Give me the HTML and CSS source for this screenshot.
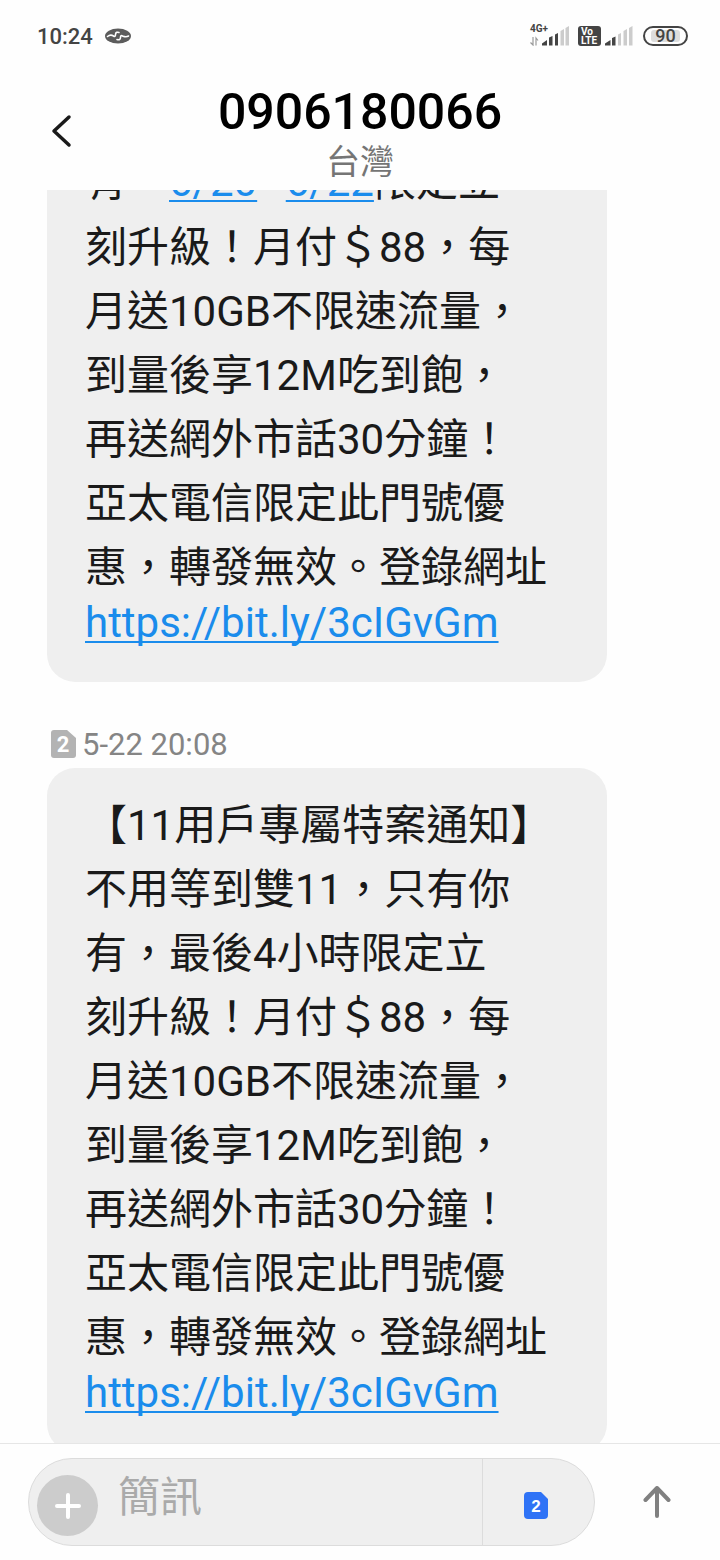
FILE: index.html
```html
<!DOCTYPE html>
<html lang="zh-Hant">

<head>
    <meta charset="utf-8">
    <meta name="viewport" content="width=device-width, initial-scale=1">
    <title>0906180066</title>
    <link rel="stylesheet" href="styles.css">
</head>

<body>
    <div class="status-bar">
        <span class="clock">10:24</span>
        <svg class="status-app" width="26" height="16" viewBox="0 0 26 16">
            <ellipse cx="13" cy="8" rx="13" ry="7.5" fill="#5c5c5c" />
            <path d="M2.500 8.500C5 6.500 7 7 8.500 8C10 9 10.500 8 10.500 6.500C10.500 4 12.500 4 14 4.500M23.500 8C21 9.500 19 8.500 17.500 8C16 7 15.500 8 15.500 9.500C15.500 12 13.500 12 12 11.500"
                fill="none" stroke="#fff" stroke-width="1.6" stroke-linecap="round" />
        </svg>
        <div class="status-icons">
            <div class="network">
                <span class="network-type">4G+</span>
                <svg width="39" height="20" viewBox="0 0 39 20">
                    <path d="M3 11V19L0.500 16.500M6 19.500V12L8 14.500" fill="none" stroke="#999" stroke-width="1.200" />
                    <path d="M12 19.500V17.500L17 14V19.500ZM19 19.500V11.500L22.500 10V19.500ZM25 19.500V8.500L28 7V19.500Z" fill="#444" />
                    <path d="M30.500 19.500V5L34 3V19.500ZM35.500 19.500V2L39 0V19.500Z" fill="#ccc" />
                </svg>
            </div>
            <div class="volte"><span>Vo</span><span>LTE</span></div>
            <svg class="signal" width="28" height="20" viewBox="0 0 28 20">
                <path d="M0 19.500V17.500L5.500 14V19.500ZM7 19.500V12L10.500 10.500V19.500Z" fill="#444" />
                <path d="M13 19.500V8.500L16 7V19.500ZM18.500 19.500V5L22 3V19.500ZM24 19.500V2L27.500 0V19.500Z" fill="#ccc" />
            </svg>
            <span class="battery"><span class="battery-level">90</span></span>
        </div>
    </div>

    <header class="header">
        <button class="back" type="button" aria-label="返回">
            <svg width="22" height="36" viewBox="0 0 22 36">
                <path d="M18 4L3 18L18 32" fill="none" stroke="#1a1a1a" stroke-width="3.500" stroke-linecap="round"
                    stroke-linejoin="round" />
            </svg>
        </button>
        <div class="contact">
            <h1>0906180066</h1>
            <p>台灣</p>
        </div>
    </header>

    <main class="thread">
        <div class="messages">
            <div class="bubble">
                <span class="dates">有，<a href="#">6/20</a>~<a href="#">6/22</a>限定立</span>
                刻升級！月付＄88，每<br>
                月送10GB不限速流量，<br>
                到量後享12M吃到飽，<br>
                再送網外市話30分鐘！<br>
                亞太電信限定此門號優<br>
                惠，轉發無效。登錄網址
                <a class="url" href="https://bit.ly/3cIGvGm">https://bit.ly/3cIGvGm</a>
            </div>

            <div class="stamp">
                <svg width="25" height="28" viewBox="0 0 25 28">
                    <path d="M3 0H16L25 8V25Q25 28 22 28H3Q0 28 0 25V3Q0 0 3 0Z" fill="#b3b3b3" />
                    <text class="sim-number" x="12" y="22" font-size="22">2</text>
                </svg>
                <time>5-22 20:08</time>
            </div>

            <div class="bubble">
                【11用戶專屬特案通知】<br>
                不用等到雙11，只有你<br>
                有，最後4小時限定立<br>
                刻升級！月付＄88，每<br>
                月送10GB不限速流量，<br>
                到量後享12M吃到飽，<br>
                再送網外市話30分鐘！<br>
                亞太電信限定此門號優<br>
                惠，轉發無效。登錄網址
                <a class="url" href="https://bit.ly/3cIGvGm">https://bit.ly/3cIGvGm</a>
            </div>
        </div>
    </main>

    <form class="composer">
        <div class="field">
            <button class="add" type="button" aria-label="附件">
                <svg width="26" height="26" viewBox="0 0 26 26">
                    <path d="M13 2V24M2 13H24" stroke="#fff" stroke-width="4" stroke-linecap="round" />
                </svg>
            </button>
            <input class="text" type="text" placeholder="簡訊" aria-label="簡訊">
            <button class="sim" type="button" aria-label="SIM 2">
                <svg width="24" height="27" viewBox="0 0 24 27">
                    <path d="M4 0H17L24 7V23Q24 27 20 27H4Q0 27 0 23V4Q0 0 4 0Z" fill="#2f73f6" />
                    <text class="sim-number" x="12" y="20" font-size="17">2</text>
                </svg>
            </button>
        </div>
        <button class="send" type="button" aria-label="傳送">
            <svg width="28" height="34" viewBox="0 0 28 34">
                <path d="M14 3V31M2.500 15L14 3L25.500 15" fill="none" stroke="#808080" stroke-width="4"
                    stroke-linecap="round" stroke-linejoin="round" />
            </svg>
        </button>
    </form>
</body>

</html>
```
FILE: styles.css
```css
* {
    box-sizing: border-box;
}

body {
    display: flex;
    flex-direction: column;
    height: 100vh;
    margin: 0;
    background: #fefefe;
    color: #1a1a1a;
    font-family: Roboto, "Noto Sans CJK TC", sans-serif;
}

button {
    display: flex;
    flex-shrink: 0;
    align-items: center;
    justify-content: center;
    padding: 0;
    border: none;
    background: none;
    cursor: pointer;
}

a {
    color: #1a8cec;
    text-decoration-thickness: 2px;
    text-decoration-skip-ink: none;
    text-underline-offset: 4px;
}

.status-bar {
    display: flex;
    align-items: center;
    height: 72px;
    padding: 0 32px 0 37px;
    color: #444;
}

.clock {
    font-size: 22px;
    font-weight: 500;
}

.status-app {
    margin-left: 12px;
}

.status-icons {
    display: flex;
    align-items: center;
    margin-left: auto;
}

.network {
    position: relative;
    display: flex;
    margin-right: 9px;
}

.network-type {
    position: absolute;
    top: -2px;
    left: 0;
    font-size: 10px;
    font-weight: 700;
    line-height: 10px;
}

.volte {
    display: flex;
    flex-direction: column;
    justify-content: center;
    width: 23px;
    height: 20px;
    margin-right: 4px;
    padding-left: 3px;
    border-radius: 3px;
    background: #444;
    color: #fff;
    font-size: 10px;
    font-weight: 700;
    line-height: 9px;
}

.battery {
    display: flex;
    width: 45px;
    height: 20px;
    margin-left: 10px;
    padding: 2px 6px;
    border: 2px solid #444;
    border-radius: 10px;
}

.battery-level {
    flex: 1;
    border-radius: 3px;
    background: #ddd;
    font-size: 18px;
    font-weight: 500;
    line-height: 12px;
    text-align: center;
}

.header {
    display: grid;
    grid-template-columns: 96px 1fr 96px;
    align-items: center;
    height: 118px;
}

.back {
    height: 96px;
    padding-left: 28px;
}

.contact {
    padding-top: 6px;
    text-align: center;
}

.contact h1 {
    margin: 0;
    color: #000;
    font-size: 50px;
    font-weight: 500;
    line-height: 56px;
}

.contact p {
    margin: 0;
    color: #757575;
    font-size: 34px;
    line-height: 44px;
}

.thread {
    display: flex;
    flex: 1;
    flex-direction: column;
    justify-content: flex-end;
    min-height: 0;
    overflow: hidden;
    padding: 0 113px 0 47px;
}

/* newest bubble runs slightly under the composer */
.messages {
    margin-bottom: -9px;
}

.bubble {
    padding: 26px 12px 36px 38px;
    border-radius: 28px;
    background: #efefef;
    font-size: 42px;
    line-height: 64px;
}

.dates {
    display: block;
    padding-bottom: 2px;
}

.url {
    display: block;
    line-height: 46px;
}

.stamp {
    display: flex;
    align-items: center;
    gap: 6px;
    height: 86px;
    padding: 38px 0 0 4px;
    color: #858585;
    font-size: 31px;
}

.sim-number {
    fill: #fff;
    font-weight: 700;
    text-anchor: middle;
}

.composer {
    display: flex;
    height: 117px;
    padding: 14px 24px 14px 28px;
    border-top: 1px solid #e6e6e6;
}

.field {
    display: flex;
    flex: 1;
    min-width: 0;
    height: 88px;
    border: 1px solid #dcdcdc;
    border-radius: 44px;
    background: #efefef;
}

.add {
    width: 61px;
    height: 61px;
    margin: 16px 0 0 8px;
    border-radius: 50%;
    background: #ccc;
}

.text {
    flex: 1;
    min-width: 0;
    padding: 0 20px 10px;
    border: none;
    outline: none;
    background: none;
    font: inherit;
    font-size: 42px;
}

.text::placeholder {
    color: #aaa;
    opacity: 1;
}

.sim {
    width: 112px;
    padding: 6px 6px 0 0;
    border-left: 1px solid #dcdcdc;
}

.send {
    width: 78px;
    margin-left: 23px;
}
```
